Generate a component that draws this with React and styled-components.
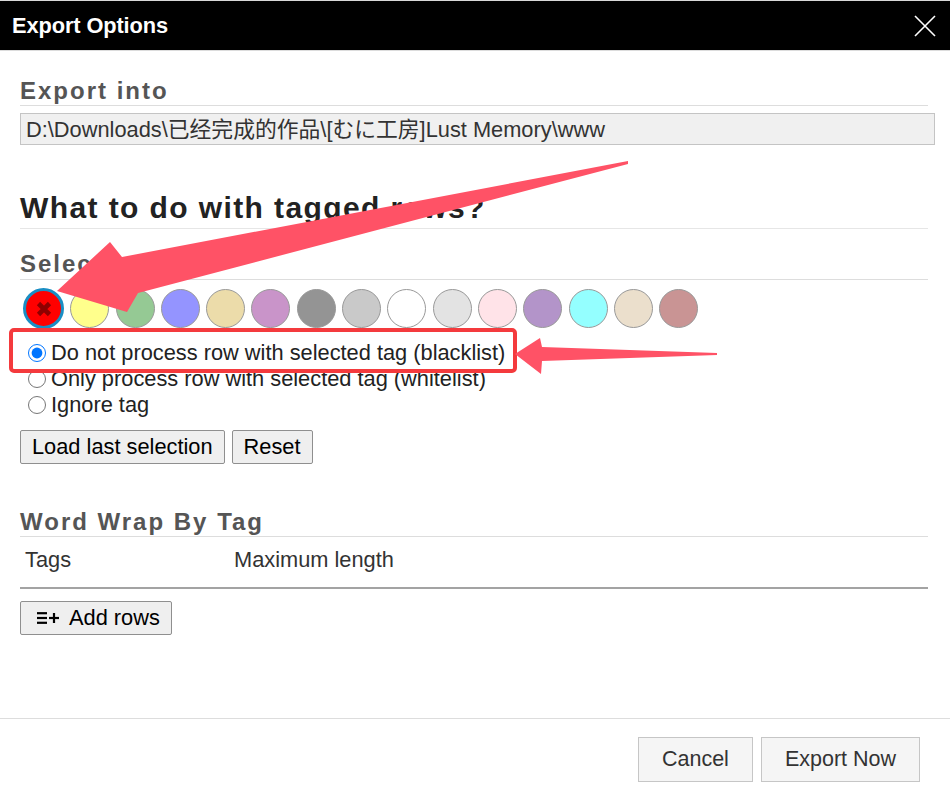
import React from 'react';
import styled, { createGlobalStyle } from 'styled-components';

const GlobalStyle = createGlobalStyle`
  body {
    margin: 0;
    font-family: "Liberation Sans", Arial, sans-serif;
    background: #fff;
  }
`;

const Dialog = styled.div`
  position: relative;
  width: 950px;
  height: 803px;
  display: flex;
  flex-direction: column;
  background: #fff;
  overflow: hidden;
`;

const TitleBar = styled.div`
  height: 49px;
  border-top: 1px solid #d8d8d8;
  border-bottom: 1px solid #dcdcdc;
  background: #000;
  display: flex;
  align-items: center;
  justify-content: space-between;
  padding: 0 13px 0 12px;
`;

const Title = styled.div`
  color: #fff;
  font-weight: bold;
  font-size: 21.8px;
  letter-spacing: -0.1px;
`;

const CloseButton = styled.button`
  border: 0;
  padding: 0;
  background: none;
  width: 24px;
  height: 24px;
  display: flex;
  align-items: center;
  justify-content: center;
`;

const Body = styled.div`
  flex: 1;
  padding: 0 22px 0 20px;
`;

const SectionHeading = styled.div`
  margin-top: ${p => p.$top}px;
  font-size: 24px;
  line-height: 28px;
  font-weight: bold;
  letter-spacing: 2px;
  color: #555;
  padding-bottom: ${p => p.$pad || 0}px;
  border-bottom: 1px solid #ddd;
`;

const PathInput = styled.div`
  margin-top: 7px;
  width: calc(100% + 7px);
  height: 32px;
  box-sizing: border-box;
  padding: 2px 5px 0;
  line-height: 28px;
  background: #f0f0f0;
  border: 1px solid #c4c4c4;
  font-size: 21.8px;
  color: #333;
  font-family: "Liberation Sans", "Noto Sans CJK SC", sans-serif;
  white-space: nowrap;
`;

const BigHeading = styled.h2`
  margin: 45px 0 0;
  font-size: 30px;
  line-height: 36px;
  letter-spacing: 1.4px;
  color: #222;
  padding-bottom: 2px;
  border-bottom: 1px solid #e6e6e6;
`;

const Swatches = styled.div`
  display: flex;
  gap: 6.3px;
  margin: 9px 0 0 4px;
`;

const Swatch = styled.div`
  width: 39px;
  height: 39px;
  box-sizing: border-box;
  border-radius: 50%;
  background: ${p => p.$color};
  border: ${p => (p.$selected ? '3px solid #1a8ec4' : '1px solid #999')};
  display: flex;
  align-items: center;
  justify-content: center;
  ${p => p.$selected && 'margin: -1px 0; width: 41px; height: 41px; margin-left: -1px;'}
`;

const RadioGroup = styled.div`
  margin-top: 12px;
`;

const RadioRow = styled.label`
  display: flex;
  align-items: center;
  height: 26px;
  font-size: 21.8px;
  color: #222;
`;

const Radio = styled.input`
  width: 18px;
  height: 18px;
  margin: 0 5px 0 8px;
`;

const ButtonRow = styled.div`
  display: flex;
  gap: 7px;
  margin-top: 12px;
`;

const PlainButton = styled.button`
  height: 34px;
  padding: 0 ${p => p.$right || 11}px 0 ${p => p.$left || 11}px;
  font-family: "Liberation Sans", Arial, sans-serif;
  font-size: 21.8px;
  color: #000;
  background: #efefef;
  border: 1px solid #8f8f8f;
  border-radius: 2px;
  display: flex;
  align-items: center;
  gap: 10px;
`;

const TableHead = styled.div`
  display: grid;
  grid-template-columns: 209px 1fr;
  padding: 10px 5px 15px;
  font-size: 21.8px;
  line-height: 25px;
  color: #333;
  border-bottom: 2px solid #a3a3a3;
`;

const AddRowsWrap = styled.div`
  margin-top: 12px;
  display: flex;
`;

const Footer = styled.div`
  border-top: 1px solid #ddd;
  padding: 18px 30px 21px 0;
  display: flex;
  justify-content: flex-end;
  gap: 8px;
`;

const FooterButton = styled.button`
  height: 45px;
  padding: 0 23px;
  font-family: "Liberation Sans", Arial, sans-serif;
  font-size: 21.5px;
  color: #333;
  background: #f5f5f5;
  border: 1px solid #c6c6c6;
`;

const Highlight = styled.div`
  position: absolute;
  left: 9px;
  top: 328px;
  width: 508px;
  height: 45px;
  box-sizing: border-box;
  border: 4px solid #f43a3d;
  border-radius: 5px;
  pointer-events: none;
`;

const Arrows = styled.svg`
  position: absolute;
  left: 0;
  top: 0;
  pointer-events: none;
`;

const swatchColors = [
  '#ff0000', '#ffff8c', '#95c994', '#9494ff', '#ecdcaa', '#c994c9', '#949494',
  '#c9c9c9', '#ffffff', '#e3e3e3', '#ffe3e8', '#b394c9', '#94ffff', '#ebdfcc', '#c99494',
];

function ListPlusIcon() {
  return (
    <svg width="22" height="12" viewBox="0 0 22 12">
      <g stroke="#000" strokeWidth="2.2">
        <line x1="0" y1="1.2" x2="10" y2="1.2" />
        <line x1="0" y1="6" x2="10" y2="6" />
        <line x1="0" y1="10.8" x2="10" y2="10.8" />
        <line x1="12" y1="6" x2="22" y2="6" />
        <line x1="17" y1="1" x2="17" y2="11" />
      </g>
    </svg>
  );
}

export default function App() {
  return (
    <>
      <GlobalStyle />
      <Dialog>
        <TitleBar>
          <Title>Export Options</Title>
          <CloseButton aria-label="Close">
            <svg width="22" height="22" viewBox="0 0 22 22">
              <path d="M1 1 L21 21 M21 1 L1 21" stroke="#fff" strokeWidth="1.6" />
            </svg>
          </CloseButton>
        </TitleBar>

        <Body>
          <SectionHeading $top={26}>Export into</SectionHeading>
          <PathInput>D:\Downloads\已经完成的作品\[むに工房]Lust Memory\www</PathInput>

          <BigHeading>What to do with tagged rows?</BigHeading>

          <SectionHeading $top={21} $pad={1}>Select a tag</SectionHeading>
          <Swatches>
            {swatchColors.map((c, i) => (
              <Swatch key={i} $color={c} $selected={i === 0}>
                {i === 0 && (
                  <svg width="16" height="16" viewBox="0 0 16 16">
                    <path d="M2.5 2.5 L13.5 13.5 M13.5 2.5 L2.5 13.5" stroke="#8e0000" strokeWidth="4.6" />
                  </svg>
                )}
              </Swatch>
            ))}
          </Swatches>

          <RadioGroup>
            <RadioRow>
              <Radio type="radio" name="mode" defaultChecked />
              Do not process row with selected tag (blacklist)
            </RadioRow>
            <RadioRow>
              <Radio type="radio" name="mode" />
              Only process row with selected tag (whitelist)
            </RadioRow>
            <RadioRow>
              <Radio type="radio" name="mode" />
              Ignore tag
            </RadioRow>
          </RadioGroup>

          <ButtonRow>
            <PlainButton>Load last selection</PlainButton>
            <PlainButton>Reset</PlainButton>
          </ButtonRow>

          <SectionHeading $top={44}>Word Wrap By Tag</SectionHeading>
          <TableHead>
            <div>Tags</div>
            <div>Maximum length</div>
          </TableHead>
          <AddRowsWrap>
            <PlainButton $left={16} $right={11}>
              <ListPlusIcon />
              Add rows
            </PlainButton>
          </AddRowsWrap>
        </Body>

        <Footer>
          <FooterButton>Cancel</FooterButton>
          <FooterButton>Export Now</FooterButton>
        </Footer>

        <Highlight />
        <Arrows width="950" height="803" viewBox="0 0 950 803">
          <polygon
            fill="#ff5266"
            points="628,161 122,257 110,242 57,291 127,312 138,293 628,164"
          />
          <polygon
            fill="#ff5266"
            points="717,353 542,347 540,338 515,354 541,374 542,361 717,355"
          />
        </Arrows>
      </Dialog>
    </>
  );
}
